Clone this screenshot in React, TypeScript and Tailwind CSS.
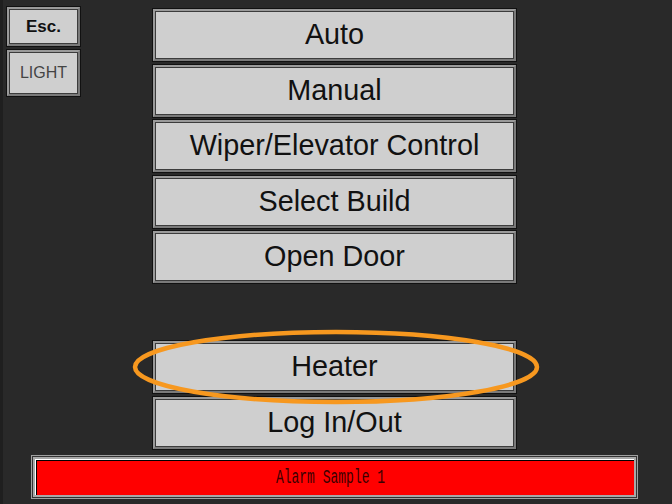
const menu = ["Auto", "Manual", "Wiper/Elevator Control", "Select Build", "Open Door"];

function Btn({ label, className = "", text = "" }: { label: string; className?: string; text?: string }) {
  return (
    <div className={`border border-[#111] ${className}`}>
      <div className="h-full border-2 border-t-[#9a9a9a] border-l-[#9a9a9a] border-b-[#7a7a7a] border-r-[#7a7a7a]">
        <div className={`h-full flex items-center justify-center border border-[#3c3c3c] bg-[#cfcfcf] text-[#111] ${text}`}>
          {label}
        </div>
      </div>
    </div>
  );
}

export default function App() {
  return (
    <div
      className="relative w-[672px] h-[504px] bg-[#292929] border-l-[3px] border-[#1f1f1f] flex flex-col"
      style={{ fontFamily: '"Liberation Sans", Arial, sans-serif' }}
    >
      <div className="flex">
        <div className="ml-[3px] mt-[6px] w-[75px] flex flex-col gap-[2px]">
          <Btn label="Esc." className="h-[41px]" text="text-[17px] font-bold" />
          <Btn label="LIGHT" className="h-[48px]" text="text-[16px] text-[#444]" />
        </div>
        <div className="ml-[71px] mt-[8px] w-[365px] flex flex-col">
          <div className="flex flex-col gap-[1.5px]">
            {menu.map((m) => (
              <Btn key={m} label={m} className="h-[54px]" text="text-[28.8px]" />
            ))}
          </div>
          <div className="mt-[56px] flex flex-col gap-[2px]">
            <Btn label="Heater" className="h-[54px]" text="text-[28.8px]" />
            <Btn label="Log In/Out" className="h-[54px]" text="text-[28.8px]" />
          </div>
        </div>
      </div>

      <div className="ml-[28px] mt-[5px] w-[607px] h-[44px] border border-[#a0a0a0] bg-[#333] p-[1px]">
        <div className="h-full border-2 border-[#a8a8a8]">
          <div className="h-full border-t border-l border-t-white border-l-white">
            <div
              className="h-full flex items-center justify-center bg-[#ff0000] border-t border-l border-black border-r-white border-b-white text-[13px] text-[#3a0000]"
              style={{ fontFamily: '"Liberation Mono", "DejaVu Sans Mono", monospace' }}
            >
              <span className="inline-block mr-[10px] scale-y-[1.6]">Alarm Sample 1</span>
            </div>
          </div>
        </div>
      </div>

      <svg className="absolute left-[128px] top-[329px]" width="410" height="76" viewBox="0 0 410 76">
        <ellipse cx="205" cy="38" rx="201" ry="35" fill="none" stroke="#f7981f" strokeWidth="4.5" />
      </svg>
    </div>
  );
}
